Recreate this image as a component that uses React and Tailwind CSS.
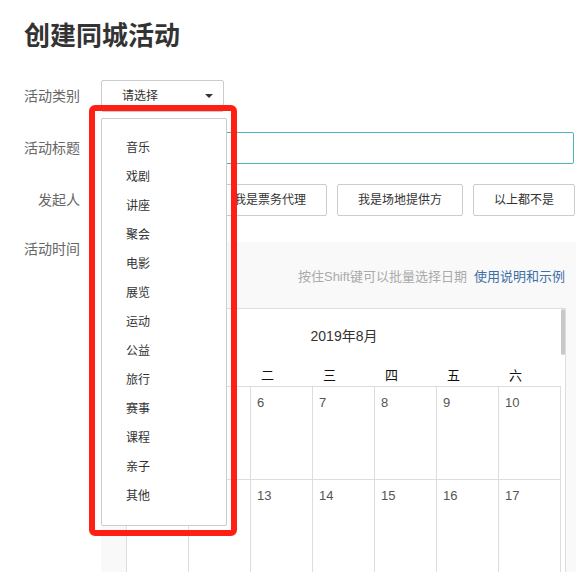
import React from "react";

const FONT = { fontFamily: '"Liberation Sans", "Noto Sans CJK SC", sans-serif' };

const items = ["音乐", "戏剧", "讲座", "聚会", "电影", "展览", "运动", "公益", "旅行", "赛事", "课程", "亲子", "其他"];
const weekdays = ["日", "一", "二", "三", "四", "五", "六"];
const rows = [
  [4, 5, 6, 7, 8, 9, 10],
  [11, 12, 13, 14, 15, 16, 17],
];

function Label({ children, className = "" }) {
  return (
    <div className={"w-[56px] shrink-0 text-right text-[14px] text-[#666] " + className}>{children}</div>
  );
}

export default function App() {
  return (
    <div className="relative w-[576px] h-[572px] overflow-hidden bg-white pl-[24px]" style={FONT}>
      <div className="pt-[18px] text-[26px] font-bold leading-[36px] text-[#333]">创建同城活动</div>

      {/* row 1 */}
      <div className="mt-[26px] flex items-center">
        <Label className="leading-[20px]">活动类别</Label>
        <div className="ml-[21px] flex h-[32px] w-[123px] items-center justify-between rounded-[2px] border border-[#ccc] pl-[20px] pr-[10px] text-[12px] text-[#333]">
          <span className="leading-[16px]">请选择</span>
          <span className="h-0 w-0 border-x-[4px] border-t-[4px] border-x-transparent border-t-[#333]"></span>
        </div>
      </div>

      {/* row 2 */}
      <div className="mt-[20px] flex items-center">
        <Label className="leading-[20px]">活动标题</Label>
        <div className="ml-[21px] h-[32px] w-[473px] rounded-[2px] border border-[#4fb3b8]"></div>
      </div>

      {/* row 3 */}
      <div className="mt-[20px] flex items-center">
        <Label className="leading-[20px]">发起人</Label>
        <div className="ml-[21px] flex gap-[10px]">
          {["我是主办方", "我是票务代理", "我是场地提供方", "以上都不是"].map((t, i) => (
            <div
              key={t}
              className="flex h-[32px] shrink-0 items-center whitespace-nowrap rounded-[2px] border border-[#ccc] px-5 text-[12px] leading-[16px] text-[#333]"
            >
              <span className={i === 0 ? "invisible" : ""}>{t}</span>
            </div>
          ))}
        </div>
      </div>

      {/* row 4 */}
      <div className="mt-[26px] flex items-start">
        <Label className="leading-[14px]">活动时间</Label>
        <div className="ml-[21px] w-[475px] shrink-0 bg-[#f9f9f9]">
          <div className="flex justify-end pr-[11px] pt-[26px] text-[13px] leading-[18px] whitespace-nowrap">
            <span className="text-[#aaa]">按住Shift键可以批量选择日期</span>
            <span className="ml-[7px] text-[#3d6fa5]">使用说明和示例</span>
          </div>
          <div className="ml-[25px] mt-[22px] w-[440px] border border-[#ddd] bg-white">
            <div className="flex">
              <div className="w-[434px]">
                <div className="flex h-[54px] items-center justify-center text-[14px] leading-[20px] text-[#333]">
                  2019年8月
                </div>
                <div className="flex h-[24px] items-end border-b border-[#ddd]">
                  {weekdays.map((w, i) => (
                    <div key={w} className="w-[62px] pl-[10px] text-[13px] leading-[20px] text-[#111]">
                      <span className={i < 2 ? "invisible" : ""}>{w}</span>
                    </div>
                  ))}
                </div>
                {rows.map((r, ri) => (
                  <div key={ri} className="flex h-[93px] border-b border-[#ddd]">
                    {r.map((d, i) => (
                      <div
                        key={d}
                        className="w-[62px] border-r border-[#ddd] pl-[6px] pt-[8px] text-[13px] leading-[16px] text-[#555]"
                      >
                        <span className={i < 2 ? "invisible" : ""}>{d}</span>
                      </div>
                    ))}
                  </div>
                ))}
              </div>
              <div className="w-[4px]">
                <div className="h-[46px] w-[4px] rounded-[2px] bg-[#c8c8c8]"></div>
              </div>
            </div>
          </div>
        </div>
      </div>

      {/* dropdown */}
      <div className="absolute left-[101px] top-[118px] h-[408px] w-[126px] rounded-[2px] border border-[#ccc] bg-white pt-[15px] pl-[24px]">
        {items.map((t) => (
          <div key={t} className="text-[12px] leading-[29px] text-[#333]">
            {t}
          </div>
        ))}
      </div>

      {/* red annotation box */}
      <div className="absolute left-[89px] top-[105px] h-[431px] w-[148px] rounded-[6px] border-[6px] border-[#ff1f14]"></div>
    </div>
  );
}
